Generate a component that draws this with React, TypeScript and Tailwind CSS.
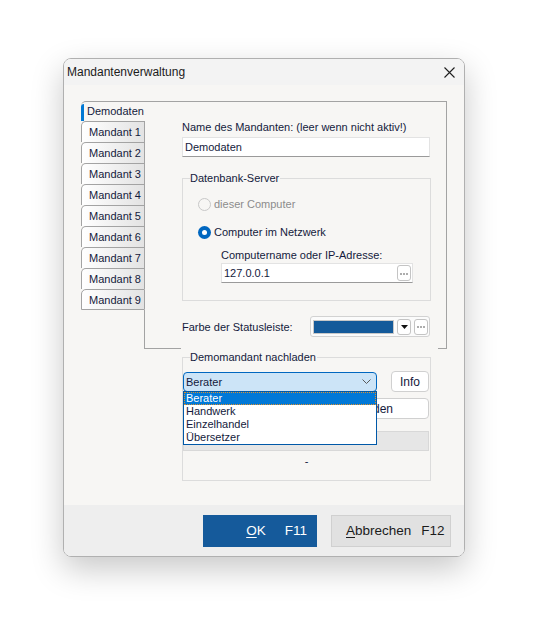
import React from "react";

const FONT = { fontFamily: '"Liberation Sans", Arial, sans-serif' };

function Tab({ label, last }: { label: string; last?: boolean }) {
  return (
    <div
      className={
        "h-[21px] flex items-center pl-[7px] border-t border-l border-r border-[#a3a3a3] rounded-tl-[5px] bg-linear-to-r from-white to-[#e3e3e3] text-[#141a3c] " +
        (last ? "border-b" : "")
      }
    >
      {label}
    </div>
  );
}

function Radio({ checked, disabled, label }: { checked?: boolean; disabled?: boolean; label: string }) {
  return (
    <div className="h-[16px] flex items-center pl-[15px]">
      {checked ? (
        <span className="w-[13px] h-[13px] rounded-full bg-[#0067c0] flex items-center justify-center">
          <span className="w-[5px] h-[5px] rounded-full bg-white" />
        </span>
      ) : (
        <span className="w-[13px] h-[13px] rounded-full border border-[#c8c8c8] bg-[#f7f6f4]" />
      )}
      <span className={"ml-[3px] " + (disabled ? "text-[#8c8c8c]" : "text-[#141a3c]")}>{label}</span>
    </div>
  );
}

function Dots() {
  return (
    <span className="w-[14px] h-[16px] rounded-[3px] border border-[#c4c4c4] bg-white flex items-center justify-center">
      <svg width="8" height="2" viewBox="0 0 8 2" className="mt-[1px]">
        <circle cx="1" cy="1" r="0.75" fill="#333" />
        <circle cx="4" cy="1" r="0.75" fill="#333" />
        <circle cx="7" cy="1" r="0.75" fill="#333" />
      </svg>
    </span>
  );
}

export default function App() {
  return (
    <div className="w-[540px] h-[637px] bg-white pt-[58px] pl-[63px] overflow-hidden" style={FONT}>
      <div className="w-[402px] h-[499px] rounded-[8px] border border-[#b0b0b0] shadow-[0_12px_32px_rgba(0,0,0,0.22)] overflow-hidden flex flex-col text-[11px] leading-[16px]">
        {/* Title bar */}
        <div className="h-[26px] shrink-0 bg-[#f3f3f3] flex items-center justify-between pl-[3px] pr-[8px]">
          <span className="text-[12px] text-[#1b1b1b]">Mandantenverwaltung</span>
          <svg width="11" height="11" viewBox="0 0 11 11" className="mr-[1px]">
            <path d="M0.5 0.5 L10.5 10.5 M10.5 0.5 L0.5 10.5" stroke="#1f1f1f" strokeWidth="1.1" />
          </svg>
        </div>

        {/* Body */}
        <div className="flex-1 bg-[#f7f6f4] pt-[16px] pl-[17px]">
          <div className="flex h-[247px]">
            {/* Tabs column */}
            <div className="w-[64px] flex flex-col">
              <div className="h-[20px] flex border-t border-[#a3a3a3] rounded-tl-[5px]">
                <div className="w-[3px] mt-[2px] bg-[#0078d4] rounded-tl-[3px]" />
                <span className="pl-[3px] text-[#141a3c] leading-[19px]">Demodaten</span>
              </div>
              {["Mandant 1", "Mandant 2", "Mandant 3", "Mandant 4", "Mandant 5", "Mandant 6", "Mandant 7", "Mandant 8", "Mandant 9"].map(
                (m, i) => (
                  <Tab key={m} label={m} last={i === 8} />
                )
              )}
              <div className="flex-1 border-r border-[#a3a3a3]" />
            </div>

            {/* Panel */}
            <div className="w-[302px] border-t border-r border-[#a3a3a3] pl-[37px]">
              <div className="w-[249px] flex flex-col">
                <div className="mt-[17px] h-[16px] text-[#141a3c]">Name des Mandanten: (leer wenn nicht aktiv!)</div>
                <div className="mt-[2px] h-[20px] w-[248px] bg-white border border-[#e3e3e3] border-b-[#9a9a9a] flex items-center pl-[2px] text-[#141a3c]">
                  Demodaten
                </div>

                <fieldset className="mt-[13px] border border-[#dcdcdc] pb-[17px]">
                  <legend className="ml-[7px] pr-[1px] h-[16px] text-[#141a3c]">Datenbank-Server</legend>
                  <div className="mt-[10px]">
                    <Radio disabled label="dieser Computer" />
                  </div>
                  <div className="mt-[12px]">
                    <Radio checked label="Computer im Netzwerk" />
                  </div>
                  <div className="mt-[7px] ml-[38px] h-[16px] text-[#141a3c]">Computername oder IP-Adresse:</div>
                  <div className="ml-[38px] w-[192px] h-[20px] bg-white border border-[#e3e3e3] border-b-[#9a9a9a] flex items-center justify-between pl-[2px] pr-[1px] text-[#141a3c]">
                    <span>127.0.0.1</span>
                    <Dots />
                  </div>
                </fieldset>

                <div className="mt-[15px] h-[21px] flex items-center justify-between">
                  <span className="text-[#141a3c]">Farbe der Statusleiste:</span>
                  <div className="mr-[1px] w-[120px] h-[21px] rounded-[3px] border border-[#d2d2d2] bg-[#fbfbfb] flex items-center pl-[2px] gap-[3px]">
                    <span className="w-[81px] h-[14px] bg-[#145a9a] border border-[#c8c8c8]" />
                    <span className="w-[14px] h-[16px] rounded-[3px] border border-[#c4c4c4] bg-white flex items-center justify-center">
                      <svg width="7" height="4" viewBox="0 0 7 4">
                        <path d="M0 0 L7 0 L3.5 4 Z" fill="#111" />
                      </svg>
                    </span>
                    <Dots />
                  </div>
                </div>
              </div>
            </div>
          </div>

          {/* panel bottom edge, partly hidden */}
          <div className="flex h-[1px] ml-[63px] w-[303px]">
            <div className="w-[37px] bg-[#a3a3a3]" />
            <div className="flex-1" />
            <div className="w-[9px] bg-[#a3a3a3]" />
          </div>

          {/* Demomandant group */}
          <fieldset className="ml-[101px] w-[249px] border border-[#dcdcdc] pb-[11px]">
            <legend className="ml-[7px] pr-[1px] h-[16px] text-[#141a3c]">Demomandant nachladen</legend>
            <div className="mt-[6px] flex items-center justify-between pr-[1px]">
              <div className="relative w-[194px] h-[20px]">
                <div className="w-full h-full rounded-[4px] border border-[#0067c0] bg-[#cce4f7] flex items-center justify-between pl-[2px] pr-[5px] text-[#141a3c]">
                  <span>Berater</span>
                  <svg width="9" height="5" viewBox="0 0 9 5">
                    <path d="M0.5 0.5 L4.5 4.5 L8.5 0.5" stroke="#5a5a5a" strokeWidth="1" fill="none" />
                  </svg>
                </div>
                {/* dropdown list */}
                <div className="absolute z-10 left-0 top-[19px] w-[194px] h-[54px] bg-white border border-[#0058a8] flex flex-col text-[11px] leading-[13px] text-[#141a3c]">
                  <div className="h-[13px] bg-[#0078d7] text-white border border-dotted border-[#e0902a] pl-[1px] leading-[11px]">
                    Berater
                  </div>
                  <div className="h-[13px] pl-[2px]">Handwerk</div>
                  <div className="h-[13px] pl-[2px]">Einzelhandel</div>
                  <div className="h-[13px] pl-[2px]">Übersetzer</div>
                </div>
              </div>
              <div className="w-[38px] h-[21px] rounded-[4px] border border-[#d0d0d0] bg-white flex items-center justify-center text-[12px] text-[#141a3c]">
                Info
              </div>
            </div>
            <div className="mt-[6px] mr-[1px] h-[21px] rounded-[4px] border border-[#d0d0d0] bg-white flex items-center justify-end pr-[35px] text-[12px] text-[#141a3c]">
              Demomandant laden
            </div>
            <div className="mt-[12px] mr-[1px] h-[20px] bg-[#e6e6e6] border border-[#d8d8d8]" />
            <div className="mt-[2px] h-[16px] text-center text-[#141a3c]">-</div>
          </fieldset>
        </div>

        {/* Footer */}
        <div className="h-[51px] shrink-0 bg-[#eeeeee] flex justify-end items-start pt-[10px] pr-[13px] gap-[14px] text-[13.5px]">
          <div className="w-[114px] h-[32px] bg-[#155a9b] text-white flex items-center justify-end pr-[10px] gap-[19px]">
            <span>
              <span className="underline underline-offset-2">O</span>K
            </span>
            <span>F11</span>
          </div>
          <div className="w-[120px] h-[32px] bg-[#e1e1e1] border border-[#d0d0d0] text-[#1b1b1b] flex items-center pl-[14px] gap-[10px]">
            <span>
              <span className="underline underline-offset-2">A</span>bbrechen
            </span>
            <span>F12</span>
          </div>
        </div>
      </div>
    </div>
  );
}
